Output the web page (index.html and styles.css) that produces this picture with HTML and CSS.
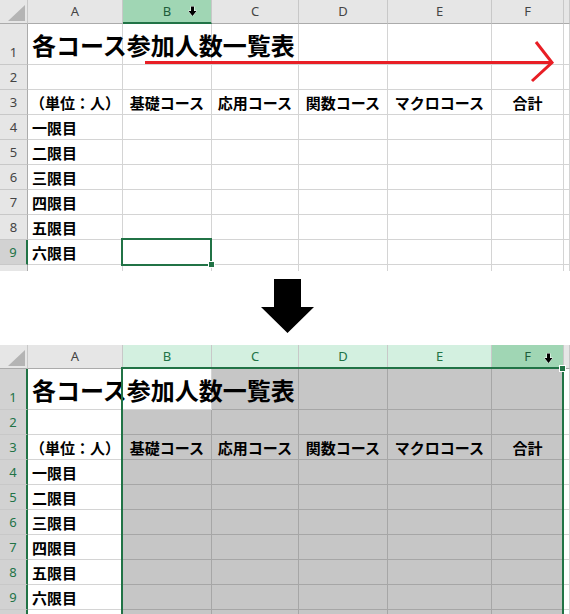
FILE: index.html
```html
<!DOCTYPE html>
<html lang="ja">
<head>
    <meta charset="UTF-8">
    <meta name="viewport" content="width=device-width, initial-scale=1.0">
    <title>列の選択</title>
    <link rel="stylesheet" href="styles.css">
</head>
<body>
    <!-- before: column B is about to be clicked -->
    <div class="sheet sheet-top">
        <div class="hd corner"><svg width="17" height="16" viewBox="0 0 17 16"><polygon points="17,0 17,16 0,16" fill="#b4b4b4"/></svg></div>
        <div class="hd">A</div><div class="hd sel">B</div><div class="hd">C</div><div class="hd">D</div><div class="hd">E</div><div class="hd">F</div><div class="hd"></div>

        <div class="rh low">1</div><div class="cell title"><span class="title-text">各コース参加人数一覧表</span></div><div class="cell"></div><div class="cell"></div><div class="cell"></div><div class="cell"></div><div class="cell"></div><div class="cell"></div>
        <div class="rh">2</div><div class="cell"></div><div class="cell"></div><div class="cell"></div><div class="cell"></div><div class="cell"></div><div class="cell"></div><div class="cell"></div>
        <div class="rh">3</div><div class="cell mid">（単位：人）</div><div class="cell mid">基礎コース</div><div class="cell mid">応用コース</div><div class="cell mid">関数コース</div><div class="cell mid">マクロコース</div><div class="cell mid">合計</div><div class="cell"></div>
        <div class="rh">4</div><div class="cell">一限目</div><div class="cell"></div><div class="cell"></div><div class="cell"></div><div class="cell"></div><div class="cell"></div><div class="cell"></div>
        <div class="rh">5</div><div class="cell">二限目</div><div class="cell"></div><div class="cell"></div><div class="cell"></div><div class="cell"></div><div class="cell"></div><div class="cell"></div>
        <div class="rh">6</div><div class="cell">三限目</div><div class="cell"></div><div class="cell"></div><div class="cell"></div><div class="cell"></div><div class="cell"></div><div class="cell"></div>
        <div class="rh">7</div><div class="cell">四限目</div><div class="cell"></div><div class="cell"></div><div class="cell"></div><div class="cell"></div><div class="cell"></div><div class="cell"></div>
        <div class="rh">8</div><div class="cell">五限目</div><div class="cell"></div><div class="cell"></div><div class="cell"></div><div class="cell"></div><div class="cell"></div><div class="cell"></div>
        <div class="rh hl">9</div><div class="cell">六限目</div><div class="cell"></div><div class="cell"></div><div class="cell"></div><div class="cell"></div><div class="cell"></div><div class="cell"></div>
        <div class="rh">10</div><div class="cell"></div><div class="cell"></div><div class="cell"></div><div class="cell"></div><div class="cell"></div><div class="cell"></div><div class="cell"></div>

        <div class="active-cell"></div>
        <div class="handle handle-top"></div>
        <svg class="cursor cursor-top" width="9" height="11" viewBox="0 0 9 11"><polygon points="3,0.5 6,0.5 6,5 8.5,5 4.5,10 0.5,5 3,5" fill="#000" stroke="#fff" stroke-width="1" paint-order="stroke"/></svg>
        <svg class="red-arrow" width="570" height="100" viewBox="0 0 570 100">
            <line x1="145" y1="62.5" x2="551" y2="62.5" stroke="#e81e25" stroke-width="3"/>
            <polyline points="536,42 552,62.5 532,81" fill="none" stroke="#e81e25" stroke-width="3"/>
        </svg>
    </div>

    <div class="step">
        <svg width="54" height="55" viewBox="0 0 54 55"><polygon points="13,0 40,0 40,28 53,28 26.5,54 0,28 13,28" fill="#000"/></svg>
    </div>

    <!-- after: columns B to F selected -->
    <div class="sheet sheet-bottom">
        <div class="hd corner"><svg width="17" height="16" viewBox="0 0 17 16"><polygon points="17,0 17,16 0,16" fill="#b4b4b4"/></svg></div>
        <div class="hd">A</div><div class="hd hl">B</div><div class="hd hl">C</div><div class="hd hl">D</div><div class="hd hl">E</div><div class="hd sel">F</div><div class="hd"></div>

        <div class="rh hl low">1</div><div class="cell title"><span class="title-text">各コース参加人数一覧表</span></div><div class="cell"></div><div class="cell gray"></div><div class="cell gray"></div><div class="cell gray"></div><div class="cell gray"></div><div class="cell"></div>
        <div class="rh hl">2</div><div class="cell"></div><div class="cell gray"></div><div class="cell gray"></div><div class="cell gray"></div><div class="cell gray"></div><div class="cell gray"></div><div class="cell"></div>
        <div class="rh hl">3</div><div class="cell mid">（単位：人）</div><div class="cell gray mid">基礎コース</div><div class="cell gray mid">応用コース</div><div class="cell gray mid">関数コース</div><div class="cell gray mid">マクロコース</div><div class="cell gray mid">合計</div><div class="cell"></div>
        <div class="rh hl">4</div><div class="cell">一限目</div><div class="cell gray"></div><div class="cell gray"></div><div class="cell gray"></div><div class="cell gray"></div><div class="cell gray"></div><div class="cell"></div>
        <div class="rh hl">5</div><div class="cell">二限目</div><div class="cell gray"></div><div class="cell gray"></div><div class="cell gray"></div><div class="cell gray"></div><div class="cell gray"></div><div class="cell"></div>
        <div class="rh hl">6</div><div class="cell">三限目</div><div class="cell gray"></div><div class="cell gray"></div><div class="cell gray"></div><div class="cell gray"></div><div class="cell gray"></div><div class="cell"></div>
        <div class="rh hl">7</div><div class="cell">四限目</div><div class="cell gray"></div><div class="cell gray"></div><div class="cell gray"></div><div class="cell gray"></div><div class="cell gray"></div><div class="cell"></div>
        <div class="rh hl">8</div><div class="cell">五限目</div><div class="cell gray"></div><div class="cell gray"></div><div class="cell gray"></div><div class="cell gray"></div><div class="cell gray"></div><div class="cell"></div>
        <div class="rh hl">9</div><div class="cell">六限目</div><div class="cell gray"></div><div class="cell gray"></div><div class="cell gray"></div><div class="cell gray"></div><div class="cell gray"></div><div class="cell"></div>
        <div class="rh hl">10</div><div class="cell"></div><div class="cell gray"></div><div class="cell gray"></div><div class="cell gray"></div><div class="cell gray"></div><div class="cell gray"></div><div class="cell"></div>

        <div class="range"></div>
        <div class="handle handle-bottom"></div>
        <svg class="cursor cursor-bottom" width="9" height="11" viewBox="0 0 9 11"><polygon points="3,0.5 6,0.5 6,5 8.5,5 4.5,10 0.5,5 3,5" fill="#000" stroke="#fff" stroke-width="1" paint-order="stroke"/></svg>
    </div>
</body>
</html>
```

FILE: styles.css
```css
body {
    margin: 0;
    width: 570px;
    overflow: hidden;
    background-color: #fff;
    font-family: "Noto Sans CJK JP", sans-serif;
}

.sheet {
    position: relative;
    display: grid;
    grid-template-columns: 28px 95px 89px 87px 89px 104px 72px 1fr;
    grid-template-rows: 24px 41px;
    grid-auto-rows: 25px;
    overflow: hidden;
}

.sheet-top {
    height: 271px;
}

.sheet-bottom {
    height: 269px;
}

.sheet > div {
    box-sizing: border-box;
    display: flex;
    align-items: center;
    white-space: nowrap;
    line-height: 1;
    min-width: 0;
}

/* column headers */
.hd {
    background-color: #e6e6e6;
    border-right: 1px solid #c8c8c8;
    border-bottom: 1px solid #ababab;
    justify-content: center;
    font-family: "Noto Sans", sans-serif;
    font-size: 13px;
    color: #444;
}

.hd.corner {
    justify-content: flex-end;
    align-items: flex-end;
    padding: 0 2px 2px 0;
}

.hd.sel {
    background-color: #a0d6b4;
    border-bottom: 2px solid #217346;
    color: #1e5c3a;
}

.hd.hl {
    background-color: #d3f0e0;
    border-bottom: 2px solid #217346;
    color: #217346;
}

/* row headers */
.rh {
    background-color: #e6e6e6;
    border-right: 1px solid #ababab;
    border-bottom: 1px solid #c8c8c8;
    justify-content: center;
    font-family: "Noto Sans", sans-serif;
    font-size: 13px;
    color: #444;
}

.sheet > .rh.low {
    align-items: flex-end;
    padding-bottom: 5px;
}

.rh.hl {
    background-color: #d2d2d2;
    border-right: 2px solid #217346;
    color: #217346;
}

/* cells */
.cell {
    border-right: 1px solid #d4d4d4;
    border-bottom: 1px solid #d4d4d4;
    padding-left: 4px;
    font-size: 15px;
    font-weight: 700;
    color: #000;
}

.cell.mid {
    justify-content: center;
    padding-left: 0;
}

.cell.gray {
    background-color: #c6c6c6;
    border-right-color: #a6a6a6;
    border-bottom-color: #a6a6a6;
}

.sheet > .cell.title {
    align-items: flex-end;
    padding-bottom: 7px;
    font-size: 24px;
}

.title-text {
    position: relative;
    z-index: 1;
}

/* selection marks */
.sheet > .active-cell {
    position: absolute;
    left: 121px;
    top: 238px;
    width: 91px;
    height: 28px;
    border: 2px solid #217346;
    z-index: 2;
}

.sheet > .range {
    position: absolute;
    left: 121px;
    top: 22px;
    width: 443px;
    height: 300px;
    border: 2px solid #217346;
    z-index: 2;
}

.sheet > .handle {
    position: absolute;
    width: 7px;
    height: 7px;
    background-color: #217346;
    border: 1px solid #fff;
    z-index: 3;
}

.handle-top {
    left: 208px;
    top: 261px;
}

.handle-bottom {
    left: 559px;
    top: 20px;
}

.cursor {
    position: absolute;
    z-index: 4;
}

.cursor-top {
    left: 188px;
    top: 6px;
}

.cursor-bottom {
    left: 544px;
    top: 8px;
}

.red-arrow {
    position: absolute;
    left: 0;
    top: 0;
    z-index: 3;
    pointer-events: none;
}

/* big arrow between the two shots */
.step {
    height: 74px;
    display: flex;
    justify-content: center;
    align-items: flex-start;
    padding-top: 8px;
    padding-left: 5px;
    box-sizing: border-box;
}

.step svg {
    display: block;
}
```
